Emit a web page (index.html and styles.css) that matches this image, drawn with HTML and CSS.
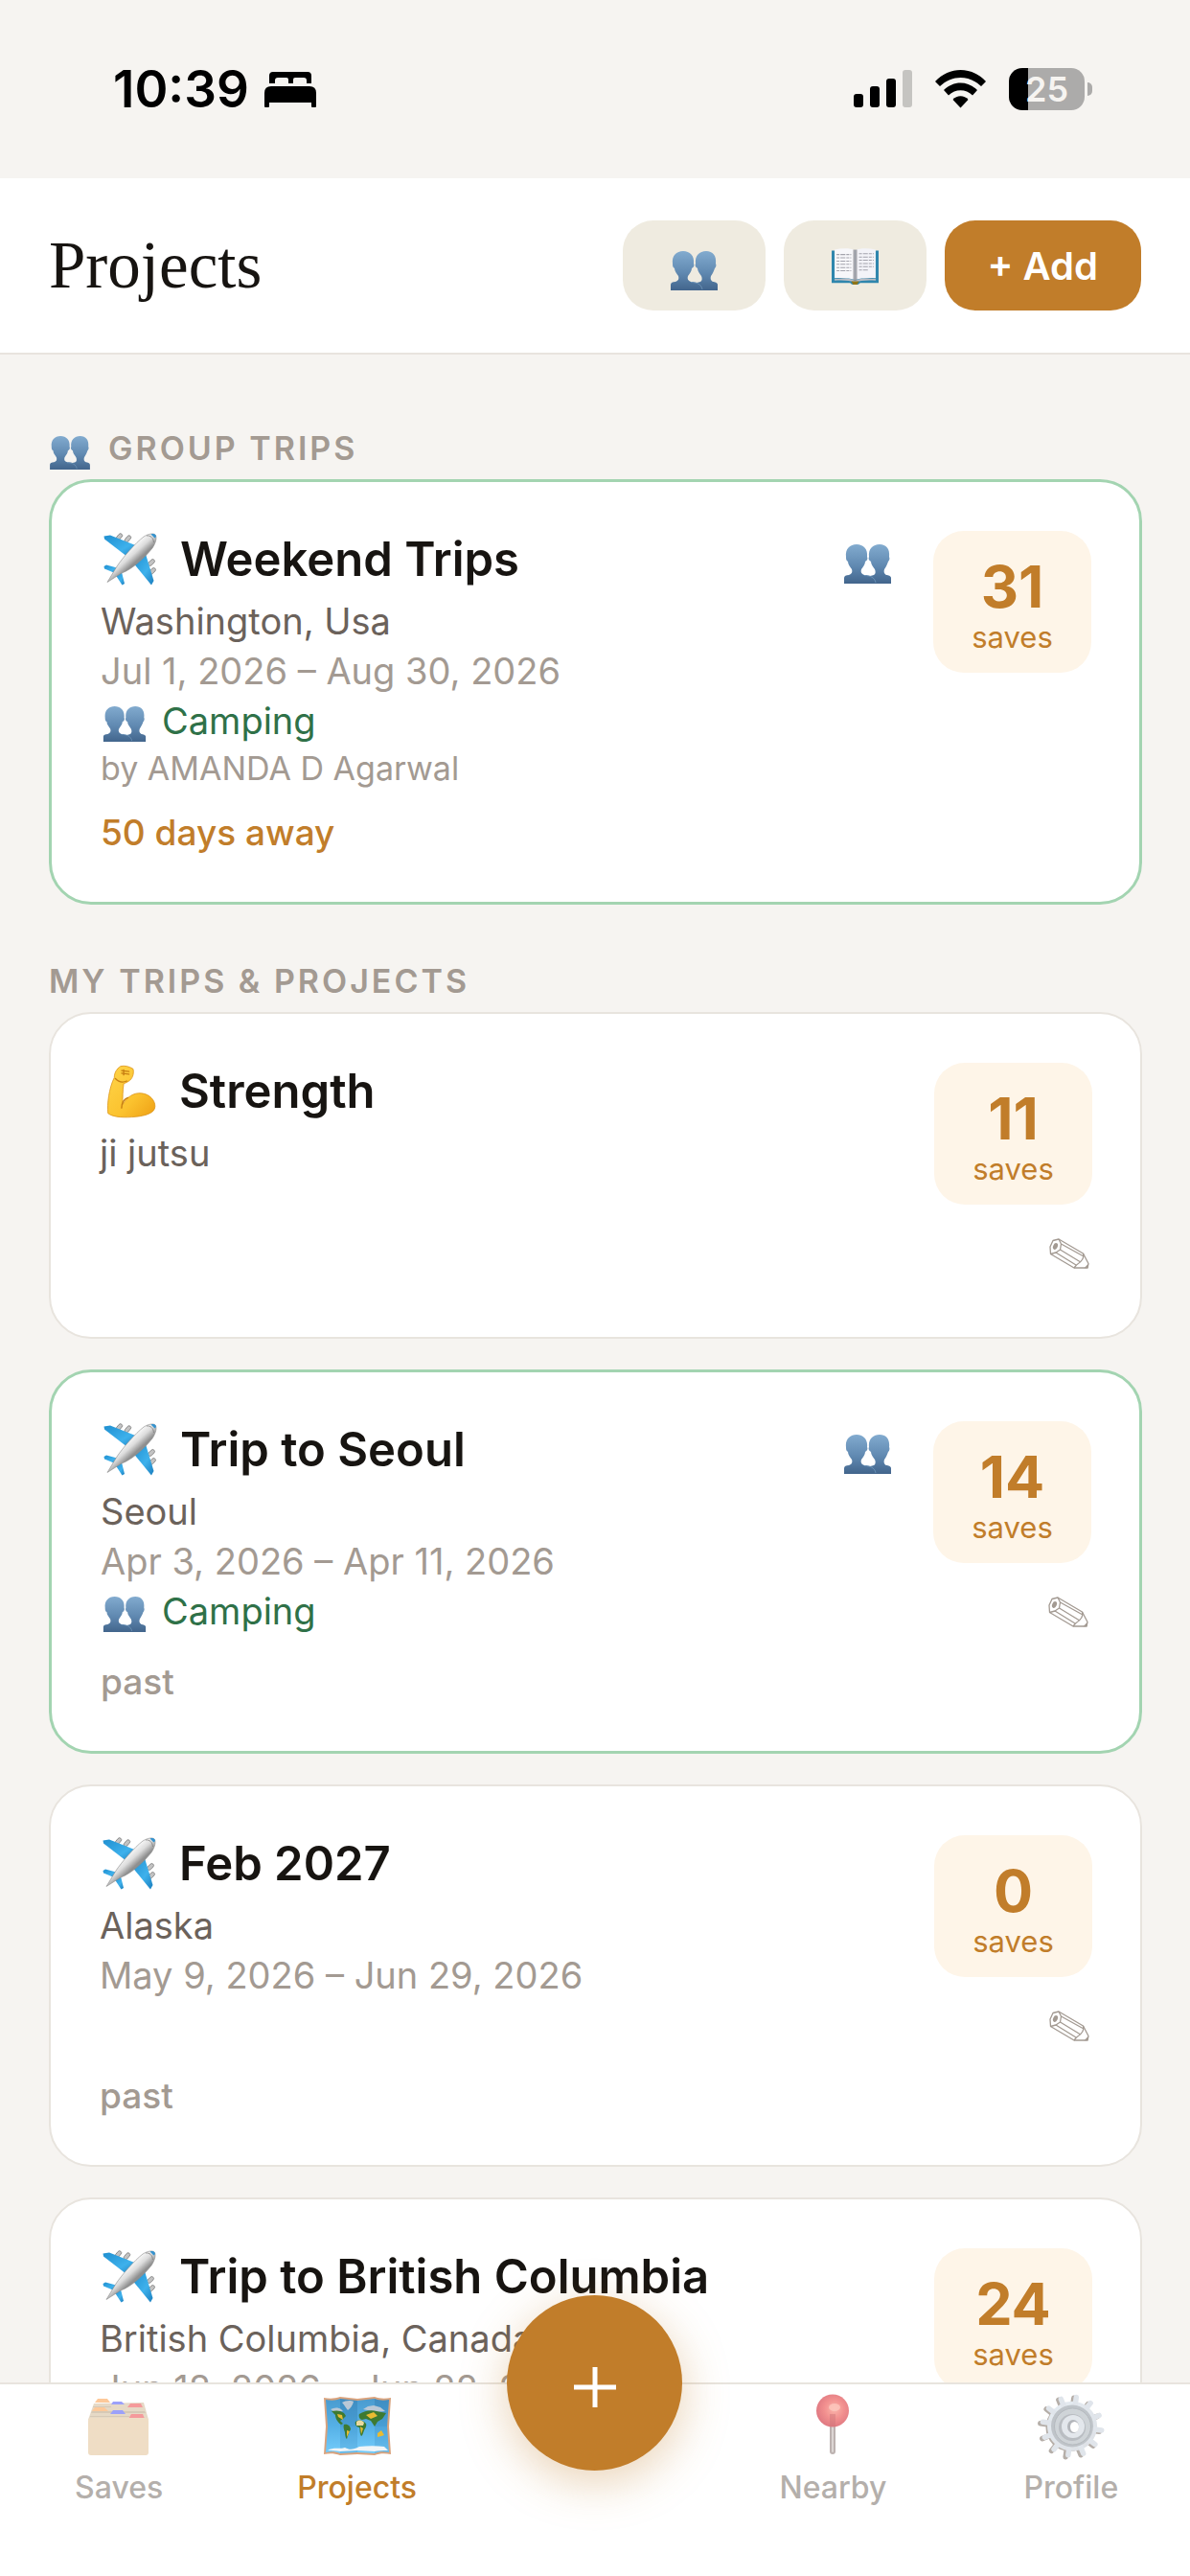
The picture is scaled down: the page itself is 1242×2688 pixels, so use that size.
FILE: index.html
```html
<!DOCTYPE html>
<html lang="en">
<head>
<meta charset="utf-8">
<meta name="viewport" content="width=device-width, initial-scale=1">
<title>Projects</title>
<link rel="stylesheet" href="styles.css">
</head>
<body>
<svg class="sprite" aria-hidden="true">
  <defs>
    <linearGradient id="g-people" gradientUnits="userSpaceOnUse" x1="0" y1="0" x2="0" y2="41">
      <stop offset="0" stop-color="#82abcf"/>
      <stop offset="0.55" stop-color="#6089b1"/>
      <stop offset="1" stop-color="#42658c"/>
    </linearGradient>
    <linearGradient id="g-body" gradientUnits="userSpaceOnUse" x1="32" y1="30" x2="42" y2="41">
      <stop offset="0" stop-color="#fafafa"/>
      <stop offset="0.5" stop-color="#dcdcdc"/>
      <stop offset="1" stop-color="#8f8f8f"/>
    </linearGradient>
    <linearGradient id="g-wing" x1="0" y1="0" x2="1" y2="1">
      <stop offset="0" stop-color="#1f8fd0"/>
      <stop offset="0.6" stop-color="#3eb1ec"/>
      <stop offset="1" stop-color="#1a7dbd"/>
    </linearGradient>
    <linearGradient id="g-arm" x1="0" y1="0" x2="1" y2="1">
      <stop offset="0" stop-color="#ffd54a"/>
      <stop offset="0.6" stop-color="#fbc22e"/>
      <stop offset="1" stop-color="#ee9f14"/>
    </linearGradient>
    <linearGradient id="g-map" x1="0" y1="0" x2="0" y2="1">
      <stop offset="0" stop-color="#4a9bcf"/>
      <stop offset="0.5" stop-color="#55b0e6"/>
      <stop offset="1" stop-color="#74ccfb"/>
    </linearGradient>
    <radialGradient id="g-pin" cx="0.55" cy="0.45" r="0.6">
      <stop offset="0" stop-color="#fbb5ab"/>
      <stop offset="0.5" stop-color="#f2908f"/>
      <stop offset="1" stop-color="#dd7680"/>
    </radialGradient>
    <linearGradient id="g-gear" x1="0" y1="0" x2="1" y2="1">
      <stop offset="0" stop-color="#e6edf3"/>
      <stop offset="1" stop-color="#dcdfe4"/>
    </linearGradient>

    <symbol id="i-people" viewBox="0 0 49 41">
      <path fill="url(#g-people)" d="M22 41V34c3-1 7-1 9-2 2-1 2-4 1-6-2-3-4-5-4-8-2-1-3-3-2-5C25 5 30 0 37 0s11 5 10 13c1 2 0 4-1 5-1 3-2 5-4 8-1 3 0 5 2 6 2 0 5 1 5 3v6z"/>
      <path fill="url(#g-people)" d="M0 41v-6c0-2 2-3 5-3 3-1 4-3 3-6-2-3-4-5-4-8-2-1-2-3-2-5C1 5 6 0 13 0s12 5 11 13c1 2 0 4-2 5 0 3-2 5-4 8-1 3 0 5 3 6 6 0 12 2 12 9z"/>
      <path fill="none" stroke="#83abcd" stroke-width=".8" opacity=".7" d="M21 32.500c6 0 11 2 12 7.500"/>
    </symbol>

    <symbol id="i-plane" viewBox="5 9 60 60">
      <g fill="#c3c3c3" stroke="#7d7d7d" stroke-width=".8">
        <rect x="20" y="13.500" width="8" height="4" rx="2" transform="rotate(-50 24 15)"/>
        <rect x="29" y="15.500" width="8" height="4" rx="2" transform="rotate(-50 33 17)"/>
        <rect x="54" y="40" width="8" height="4" rx="2" transform="rotate(-45 58 42)"/>
        <rect x="55" y="49" width="8" height="4" rx="2" transform="rotate(-45 59 51)"/>
      </g>
      <path fill="url(#g-wing)" d="M8.500 14.500 15 13.500 44 25 33 36 9 17.500z"/>
      <path fill="url(#g-wing)" d="M52 33 60.500 61 58 65.500 38 41z"/>
      <path fill="url(#g-wing)" d="M8.500 46 11 44.500 24 48 20 53 9 48.500z"/>
      <path fill="url(#g-wing)" d="M27 52 30 64 27.500 65.500 20 54z"/>
      <path fill="url(#g-body)" stroke="#8a8a8a" stroke-width=".6" d="M12 62.500 22 46C28 37 41 22 50 15c5-3 10-4 12-2s1 8-3 14C51 37 38 49 27 53z"/>
      <path fill="#3593cf" d="M57.500 12.500c3-1 5-.5 5.500 2.500l-1.500 1.500z"/>
      <path fill="none" stroke="#777" stroke-width=".7" d="M53 14c4-.5 7 2 7.500 7"/>
    </symbol>

    <symbol id="i-arm" viewBox="-1 -3 55 66" preserveAspectRatio="none">
      <path fill="url(#g-arm)" stroke="#dc9418" stroke-width=".8" d="M7 55C6 44 8 26 13 14c0-5 2-10 6-13 4-1 8 0 12 3 1 4 0 10-3 13-2 2-4 3-6 4-1 8-1 16-1 24 4-9 11-14 18-13 8 1 13 8 13 15 0 8-10 11-19 12-9 1-21 1-26-4z"/>
      <path fill="none" stroke="#c77f12" stroke-width="1.300" stroke-linecap="round" d="M20 49c0-6 2-10 6-12M14 15c3 4 7 5 11 3M20 6l7 1M20 9l7 1M22 5v6"/>
    </symbol>

    <symbol id="i-book" viewBox="0 0 48 46" preserveAspectRatio="none">
      <path fill="#2f86ad" d="M0 4h48v40H29c-1 3-9 3-10 0H0z"/>
      <path fill="#b9bcc4" d="M3 39c8-1 16-1 21 2 5-3 13-3 21-2v2c-8-1-16 0-21 2-5-2-13-3-21-2z"/>
      <path fill="#f7f7fa" d="M3 3c8-2 16-2 21 1v36c-5-2-13-3-21-2z"/>
      <path fill="#f3f3f8" d="M45 3c-8-2-16-2-21 1v36c5-2 13-3 21-2z"/>
      <path fill="#8d8d96" opacity=".75" d="M22 3h4v38h-4z"/>
      <path fill="none" stroke="#a3a3ac" stroke-width="1.200" stroke-dasharray="3 1 5 1" d="M5 9h15M5 13h15M5 17h15M5 21h15M5 25h15M5 29h15M28 8h15M28 12h15M28 16h15M28 20h15M28 24h15M28 28h9"/>
      <path fill="#8f7416" d="M20 42h8l-2 4h-4z"/>
    </symbol>

    <symbol id="i-pencil" viewBox="0 0 42 32">
      <g fill="none" stroke="#a39a92" stroke-width="1.300" stroke-linejoin="round">
        <path d="M4 2.500 10 1 35.500 16 41 26.500 40 31H26L1.500 16.500 1 9z"/>
        <path d="M10 1 12.500 6 11.500 12 7 15 1.500 16.500M12.500 6 36 19M11.500 12 32 24.500M7 15 28 28M35.500 16c1.500 4-1 8-7 12l-2.500 3"/>
      </g>
      <ellipse cx="6.500" cy="8.500" rx="2.300" ry="3.500" transform="rotate(25 6.500 8.500)" fill="#a39a92"/>
      <path fill="#a39a92" d="m41 26.500-.5 4.500-4 .3z"/>
    </symbol>

    <symbol id="i-files" viewBox="0 0 72 72">
      <path fill="#e6d9c6" d="M10 12l52-1 5 18H4z"/>
      <path fill="#fdc99a" d="M11 11l3-4h10l3 4z"/>
      <path fill="#9ba1fa" d="M28 13l2-3h9l3 3z"/>
      <path fill="#f59a9b" d="M45 16l3-4h11l2 4z"/>
      <path fill="#d6c9b6" d="M9 15h19v1H9zM8 20h55l1 2H7z"/>
      <path fill="#fdc99a" d="M8 20l3-4h10l4 4z"/>
      <path fill="#9ba1fa" d="M27 23l3-4h10l3 4z"/>
      <path fill="#d6c9b6" d="M6 25h41v1H6z"/>
      <path fill="#f59a9b" d="M46 28l3-5h12l2 5z"/>
      <path fill="#efddc5" d="M4 30q0-3 3-3h57q3 0 3 3v33q0 3-3 3H7q-3 0-3-3z"/>
    </symbol>

    <symbol id="i-map" viewBox="0 0 72 72">
      <path fill="#d9a27c" d="M1 6c6 1 11 1 17-1l18 2 18-2c5 2 11 2 17 1l-2 30 2 29c-6-1-12-1-17 1l-18-1-18 1c-6-2-11-2-17-1l2-29z"/>
      <path fill="url(#g-map)" d="M3 8c6 1 10 1 15-1l18 2 18-2c5 2 10 2 15 1l-2 28 2 27c-6-1-10-1-15 1l-18-1-18 1c-5-2-9-2-15-1l2-27z"/>
      <path fill="#12568a" opacity=".2" d="M18 7 36 9v27H18zM54 7c5 2 10 2 15 1l-2 28H54z"/>
      <path fill="#12568a" opacity=".12" d="M18 36h18v27l-18 1zM54 36h13l2 27c-6-1-10-1-15 1z"/>
      <path fill="#f1f5f8" d="M5 61c6-4 12-1 18-3 5 3 9 2 15-1 9-1 18-1 26 0l4 4c-6 0-10 0-14 1l-18-1-18 1c-5-1-9-1-13-1z"/>
      <path fill="#b9c8d6" d="M8 18c4-2 8-2 11 0l2 2-9 1zM20 11c3-2 9-3 12-1-1 4-3 7-6 9-2-2-3-5-6-8zM42 18l5-3 6-1 7 2 5 4-9 1z"/>
      <path fill="#3d7a32" d="M9 20c5-1 9-1 13 2l2 3-3 3-3 2 3 3-2 1c-3-2-6-6-6-10zM22 34c4-1 7 2 7 5-2 3-3 7-4 10-1 0-2-4-2-7-1-3-2-5-1-8zM38 23c5-3 12-5 18-3l10 2-4 6-5 3-3 5-4-6-5-2-4 1c-3 0-4-4-3-6zM34 31c5-3 8-1 11 2 1 3-1 5-2 7-1 3-2 6-3 6-2-3-1-7-2-9-3 0-5-3-4-6z"/>
      <path fill="#e9bb32" d="M15 23l5 1 1 5-5-3zM25 40l3 1-3 6zM45 24l8-3 4 4-7 3zM39 36l3 2-2 6zM57 43l4-3 3 5-3 1-4 1z"/>
      <path fill="#ead9a0" d="M35 31c4-3 6-1 8 1l-1 3h-7z"/>
    </symbol>

    <symbol id="i-pin" viewBox="0 0 72 72">
      <rect x="33" y="32" width="6" height="33" rx="3" fill="#bcb2b0"/>
      <rect x="35" y="34" width="2" height="29" rx="1" fill="#dcd6d4"/>
      <circle cx="36" cy="19.500" r="17" fill="url(#g-pin)"/>
      <rect x="33" y="23" width="6" height="13" fill="#cc7478" opacity=".45"/>
      <ellipse cx="38" cy="16" rx="6" ry="4" fill="#fcc8be" opacity=".8"/>
    </symbol>

    <symbol id="i-gear" viewBox="0 0 72 72">
      <g transform="translate(-1.500 1)">
        <circle cx="36" cy="36" r="25" fill="#b5aea8"/>
        <g stroke="#b5aea8" stroke-width="5.500" stroke-linecap="round">
          <path d="M36 5v62M20.500 9.200l31 53.600M9.200 20.500l53.600 31M5 36h62M9.200 51.500l53.600-31M20.500 62.800l31-53.600" transform="rotate(8 36 36)"/>
        </g>
      </g>
      <g transform="rotate(8 36 36)">
        <circle cx="37" cy="35.500" r="26" fill="url(#g-gear)"/>
        <g stroke="#e0e5eb" stroke-width="5.500" stroke-linecap="round">
          <path d="M37 5v61M21.500 9.200l31 53M10.200 20.500l53 30.500M6 35.500h62M10.200 51l53-30.500M21.500 62l31-53"/>
        </g>
      </g>
      <circle cx="37" cy="35.500" r="22" fill="#bfc4c9"/>
      <circle cx="37.500" cy="36" r="19" fill="#cfd4d8" stroke="#b5babf"/>
      <circle cx="37" cy="37" r="14" fill="#b9bdc2"/>
      <circle cx="38" cy="36" r="12" fill="#e3e7ec"/>
      <ellipse cx="38" cy="36" rx="6" ry="7" fill="#b3b6bb"/>
      <ellipse cx="39.500" cy="36.500" rx="4.500" ry="5.500" fill="#fff"/>
    </symbol>
  </defs>
</svg>

<div class="app">
  <div class="status-bar">
    <div class="status-left">
      <span class="clock">10:39</span>
      <svg class="bed" viewBox="0 0 54 37" aria-hidden="true">
        <path d="M5 12V4q0-4 4-4h36q4 0 4 4v8h-5V9q0-3-3-3H32q-2 0-2 2v4h-5V8q0-2-2-2h-9q-3 0-3 3v3z"/>
        <path d="M0 22q0-7 7-7h40q7 0 7 7v14q0 1-1 1h-3q-1 0-1-1v-4H5v4q0 1-1 1H1q-1 0-1-1z"/>
      </svg>
    </div>
    <div class="status-right">
      <svg class="signal" viewBox="0 0 61 40" aria-hidden="true">
        <rect x="0" y="25" width="10" height="14" rx="3"/>
        <rect x="17" y="17" width="10" height="22" rx="3"/>
        <rect x="34" y="9" width="10" height="30" rx="3"/>
        <rect x="51" y="0" width="10" height="39" rx="3" fill="#c5c4c1"/>
      </svg>
      <svg class="wifi" viewBox="0 0 53 40" aria-hidden="true">
        <path d="M0 12C15-4 38-4 53 12l-5 5C35 5 18 5 5 17z"/>
        <path d="M9 21c10-10 25-10 35 0l-5 5.500c-7-7-18-7-25 0z"/>
        <path d="M18.500 31c4-5 12-5 16 0l-8 8.500z"/>
      </svg>
      <div class="battery"><span class="battery-level">25</span><span class="battery-tip"></span></div>
    </div>
  </div>

  <header class="header">
    <h1 class="title">Projects</h1>
    <div class="actions">
      <button class="btn" type="button" aria-label="Groups"><svg class="people-btn"><use href="#i-people"/></svg></button>
      <button class="btn" type="button" aria-label="Journal"><svg class="book"><use href="#i-book"/></svg></button>
      <button class="btn btn-primary" type="button">+ Add</button>
    </div>
  </header>

  <main class="content">
    <section class="group">
      <h2 class="label"><svg class="people-label"><use href="#i-people"/></svg>GROUP TRIPS</h2>
      <article class="card card-shared">
        <div class="head">
          <div class="info">
            <h3 class="name"><svg class="emoji"><use href="#i-plane"/></svg>Weekend Trips</h3>
            <p class="row place">Washington, Usa</p>
            <p class="row">Jul 1, 2026 – Aug 30, 2026</p>
            <p class="row team"><svg class="people-row"><use href="#i-people"/></svg>Camping</p>
            <p class="owner">by AMANDA D Agarwal</p>
          </div>
          <svg class="people"><use href="#i-people"/></svg>
          <div class="side">
            <div class="badge"><strong class="count">31</strong><span class="unit">saves</span></div>
          </div>
        </div>
        <p class="when when-soon">50 days away</p>
      </article>
    </section>

    <section class="group">
      <h2 class="label">MY TRIPS &amp; PROJECTS</h2>
      <article class="card">
        <div class="head">
          <div class="info">
            <h3 class="name"><svg class="emoji"><use href="#i-arm"/></svg>Strength</h3>
            <p class="row place">ji jutsu</p>
          </div>
          <div class="side">
            <div class="badge"><strong class="count">11</strong><span class="unit">saves</span></div>
            <button class="edit" type="button" aria-label="Edit"><svg class="pencil"><use href="#i-pencil"/></svg></button>
          </div>
        </div>
      </article>

      <article class="card card-shared">
        <div class="head">
          <div class="info">
            <h3 class="name"><svg class="emoji"><use href="#i-plane"/></svg>Trip to Seoul</h3>
            <p class="row place">Seoul</p>
            <p class="row">Apr 3, 2026 – Apr 11, 2026</p>
            <p class="row team"><svg class="people-row"><use href="#i-people"/></svg>Camping</p>
          </div>
          <svg class="people"><use href="#i-people"/></svg>
          <div class="side">
            <div class="badge"><strong class="count">14</strong><span class="unit">saves</span></div>
            <button class="edit" type="button" aria-label="Edit"><svg class="pencil"><use href="#i-pencil"/></svg></button>
          </div>
        </div>
        <p class="when">past</p>
      </article>

      <article class="card">
        <div class="head">
          <div class="info">
            <h3 class="name"><svg class="emoji"><use href="#i-plane"/></svg>Feb 2027</h3>
            <p class="row place">Alaska</p>
            <p class="row">May 9, 2026 – Jun 29, 2026</p>
          </div>
          <div class="side">
            <div class="badge"><strong class="count">0</strong><span class="unit">saves</span></div>
            <button class="edit" type="button" aria-label="Edit"><svg class="pencil"><use href="#i-pencil"/></svg></button>
          </div>
        </div>
        <p class="when">past</p>
      </article>

      <article class="card">
        <div class="head">
          <div class="info">
            <h3 class="name"><svg class="emoji"><use href="#i-plane"/></svg>Trip to British Columbia</h3>
            <p class="row place">British Columbia, Canada</p>
            <p class="row">Jun 18, 2026 – Jun 22, 2026</p>
          </div>
          <div class="side">
            <div class="badge"><strong class="count">24</strong><span class="unit">saves</span></div>
          </div>
        </div>
      </article>
    </section>
  </main>

  <nav class="tabs">
    <a class="tab" href="#saves"><svg class="tab-icon"><use href="#i-files"/></svg>Saves</a>
    <a class="tab tab-active" href="#projects"><svg class="tab-icon"><use href="#i-map"/></svg>Projects</a>
    <button class="fab" type="button" aria-label="Add">
      <svg class="plus" viewBox="0 0 44 44" aria-hidden="true"><path d="M22 1v42M0 22h44"/></svg>
    </button>
    <a class="tab" href="#nearby"><svg class="tab-icon"><use href="#i-pin"/></svg>Nearby</a>
    <a class="tab" href="#profile"><svg class="tab-icon"><use href="#i-gear"/></svg>Profile</a>
  </nav>
</div>
</body>
</html>
```
FILE: styles.css
```css
* {
  box-sizing: border-box;
}

body,
h1,
h2,
h3,
p {
  margin: 0;
}

body {
  font-family: Inter, "Liberation Sans", sans-serif;
  color: #171411;
  background: #f6f4f1;
}

svg {
  display: block;
  flex: none;
}

button {
  font: inherit;
  border: 0;
  cursor: pointer;
}

.sprite {
  position: absolute;
  width: 0;
  height: 0;
}

.app {
  display: flex;
  flex-direction: column;
  height: 100vh;
}

/* Status bar */

.status-bar {
  display: flex;
  flex: none;
  align-items: center;
  justify-content: space-between;
  height: 186px;
  padding: 0 102px 0 118px;
}

.status-left {
  display: flex;
  align-items: center;
  gap: 16px;
}

.clock {
  font-size: 53px;
  font-weight: 600;
  line-height: 60px;
  color: #000;
}

.bed {
  width: 54px;
  height: 37px;
}

.status-right {
  display: flex;
  align-items: center;
  gap: 24px;
}

.signal {
  width: 61px;
  height: 40px;
}

.wifi {
  width: 53px;
  height: 40px;
}

.battery {
  display: flex;
  align-items: center;
  gap: 3px;
}

.battery-level {
  width: 79px;
  font-size: 36px;
  font-weight: 600;
  line-height: 44px;
  text-align: center;
  color: #f6f4f1;
  background: linear-gradient(90deg, #000 20px, #acabaa 20px);
  border-radius: 14px;
}

.battery-tip {
  width: 5px;
  height: 14px;
  background: #acabaa;
  border-radius: 0 8px 8px 0;
}

/* Header */

.header {
  display: flex;
  flex: none;
  align-items: center;
  justify-content: space-between;
  padding: 44px 51px;
  background: #fff;
  border-bottom: 2px solid #e8e4de;
}

.title {
  font-family: "Liberation Serif", serif;
  font-size: 69px;
  font-weight: 400;
  line-height: 80px;
}

.actions {
  display: flex;
  gap: 19px;
}

.btn {
  display: flex;
  align-items: center;
  height: 94px;
  padding: 0 50px;
  border-radius: 32px;
  background: #efebe0;
}

.btn-primary {
  padding: 0 45px;
  font-size: 40px;
  font-weight: 600;
  color: #fff;
  background: #c17d2a;
}

.people-btn {
  width: 49px;
  height: 41px;
  margin-top: 10px;
}

.book {
  width: 49px;
  height: 39px;
}

/* Project list */

.content {
  flex: 1;
  min-height: 0;
  padding: 76px 50px 76px 51px;
  overflow-y: auto;
  scrollbar-width: none;
}

.group {
  display: flex;
  flex-direction: column;
  gap: 32px;
  margin-bottom: 58px;
}

.label {
  display: flex;
  align-items: center;
  gap: 18px;
  margin-bottom: -22px;
  font-size: 34px;
  font-weight: 600;
  line-height: 44px;
  letter-spacing: 3px;
  color: #a39a92;
}

.people-label {
  width: 44px;
  height: 35px;
  margin-top: 8px;
}

.card {
  padding: 51px 50px 51px 51px;
  background: #fff;
  border: 2px solid #e8e4de;
  border-radius: 44px;
}

.card-shared {
  border: 3px solid #a3d4b1;
}

.head {
  display: flex;
  align-items: flex-start;
}

.info {
  flex: 1;
  min-width: 0;
  padding-bottom: 6px;
}

.name {
  display: flex;
  align-items: center;
  gap: 23px;
  margin-bottom: 8px;
  font-size: 49px;
  font-weight: 600;
  line-height: 60px;
}

.emoji {
  width: 60px;
  height: 60px;
}

.row {
  font-size: 38px;
  line-height: 52px;
  color: #a39a92;
}

.place {
  color: #6b625b;
}

.team {
  display: flex;
  align-items: center;
  gap: 14px;
  color: #2f7148;
}

.people-row {
  width: 50px;
  height: 37px;
  margin-top: 6px;
}

.owner {
  font-size: 34px;
  line-height: 48px;
  color: #a39a92;
}

.people {
  width: 49px;
  height: 41px;
  margin: 14px 44px 0 24px;
}

.side {
  display: flex;
  flex-direction: column;
  align-items: flex-end;
  gap: 18px;
}

.badge {
  display: flex;
  flex-direction: column;
  align-items: center;
  width: 165px;
  height: 148px;
  padding-top: 26px;
  color: #c17d2a;
  background: #fef5e8;
  border-radius: 32px;
}

.count {
  font-size: 61px;
  font-weight: 700;
  line-height: 64px;
}

.unit {
  font-size: 31px;
  line-height: 42px;
}

.edit {
  display: flex;
  align-items: center;
  height: 69px;
  padding: 0 3px 3px;
  background: none;
}

.pencil {
  width: 42px;
  height: 32px;
}

.when {
  margin-top: 16px;
  font-size: 37px;
  font-weight: 500;
  line-height: 42px;
  color: #a39a92;
}

.when-soon {
  color: #c17d2a;
}

/* Tab bar */

.tabs {
  position: relative;
  display: grid;
  flex: none;
  grid-template-columns: repeat(5, 1fr);
  padding: 8px 0 72px;
  background: #fff;
  border-top: 2px solid #e8e4de;
}

.tab {
  display: flex;
  flex-direction: column;
  align-items: center;
  gap: 8px;
  font-size: 32px;
  font-weight: 500;
  line-height: 40px;
  color: #b4afab;
  text-decoration: none;
}

.tab-active {
  color: #c17d2a;
}

.tab-icon {
  width: 72px;
  height: 72px;
}

.fab {
  display: flex;
  align-items: center;
  justify-content: center;
  justify-self: center;
  width: 183px;
  height: 183px;
  margin: -101px 0 -63px;
  padding-top: 10px;
  background: #c17d2a;
  border-radius: 50%;
  box-shadow: 0 12px 48px rgba(193, 125, 42, 0.35);
}

.plus {
  width: 44px;
  height: 44px;
  fill: none;
  stroke: #fff;
  stroke-width: 5px;
}
```
